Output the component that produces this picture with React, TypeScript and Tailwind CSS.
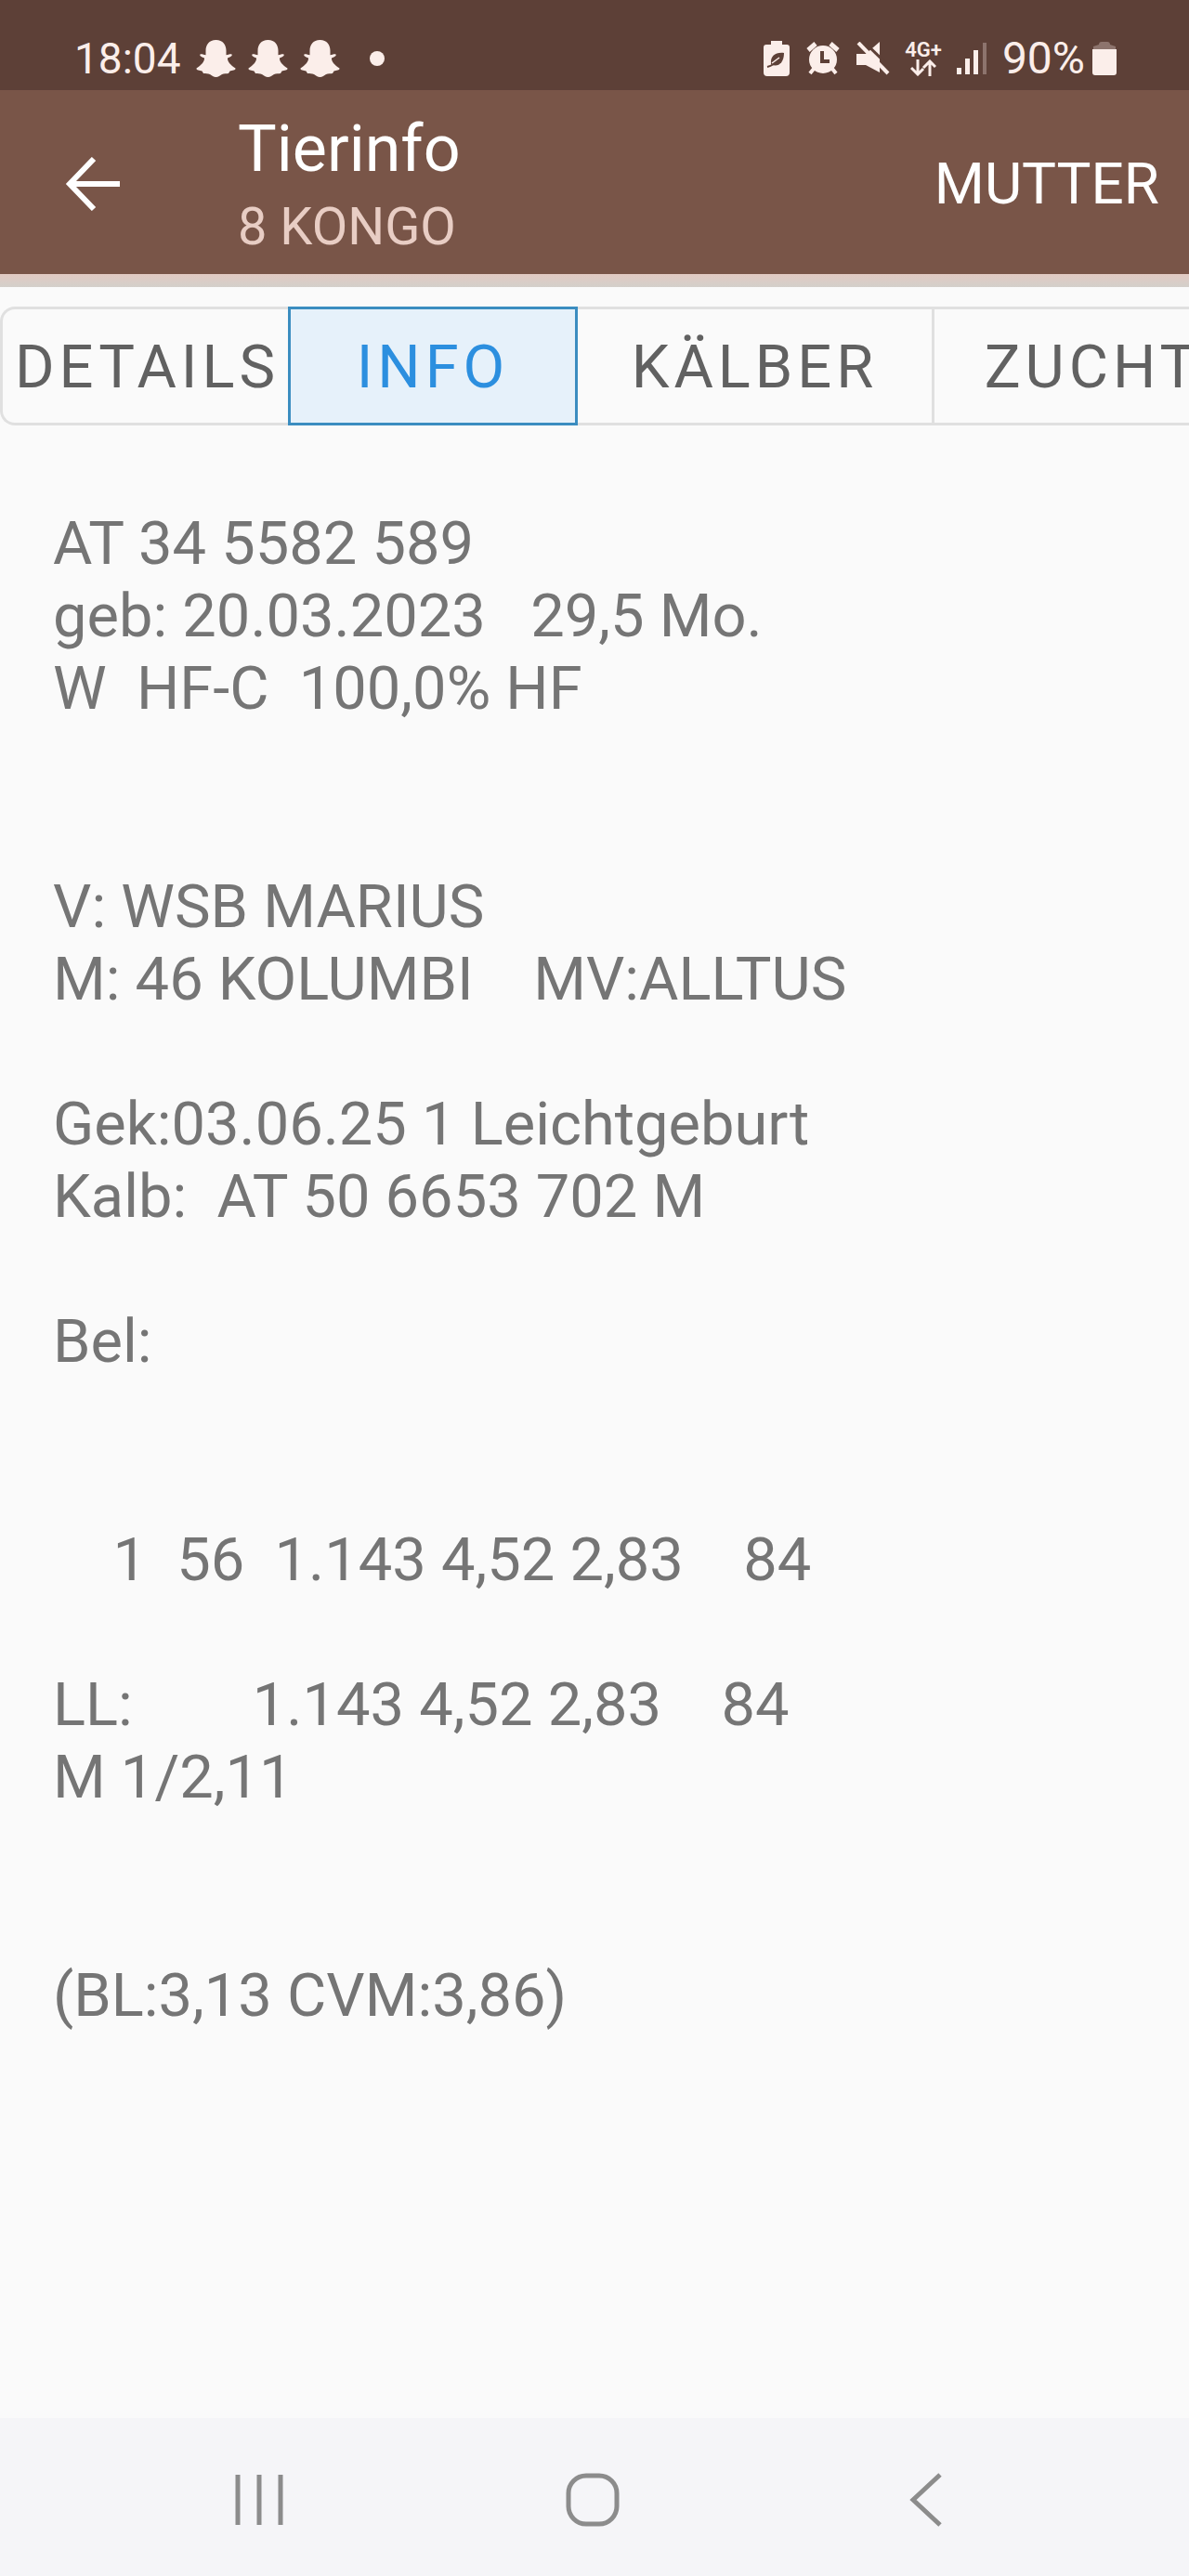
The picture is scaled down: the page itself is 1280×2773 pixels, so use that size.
import type { ReactNode } from "react";

interface TabItem {
	label: string;
	active?: boolean;
	className: string;
}

interface InfoBlock {
	lines: string[];
	className: string;
}

const tabs: TabItem[] = [
	{ label: "DETAILS", className: "w-[310px] rounded-l-2xl border-l-3 pl-1" },
	{ label: "INFO", active: true, className: "w-[312px] border-x-3" },
	{ label: "KÄLBER", className: "w-[384px] border-r-3" },
	{ label: "ZUCHT", className: "w-[340px]" },
];

const blocks: InfoBlock[] = [
	{
		lines: ["AT 34 5582 589", "geb: 20.03.2023   29,5 Mo.", "W  HF-C  100,0% HF"],
		className: "",
	},
	{
		lines: ["V: WSB MARIUS", "M: 46 KOLUMBI    MV:ALLTUS"],
		className: "mt-[157px]",
	},
	{
		lines: ["Gek:03.06.25 1 Leichtgeburt", "Kalb:  AT 50 6653 702 M"],
		className: "mt-[78px]",
	},
	{ lines: ["Bel:"], className: "mt-[78px]" },
	{
		lines: ["    1  56  1.143 4,52 2,83    84"],
		className: "mt-[157px]",
	},
	{
		lines: ["LL:        1.143 4,52 2,83    84", "M 1/2,11"],
		className: "mt-[78px]",
	},
	{ lines: ["(BL:3,13 CVM:3,86)"], className: "mt-[157px]" },
];

const GhostIcon = () => (
	<svg viewBox="0 0 43 42" className="h-[42px] w-[43px] fill-current">
		<path d="M21.500 1C14 1 10.500 6.500 10.500 12.500V17.200C8.500 17 6 15.800 4.500 16.500C3.500 17.500 5.500 19.500 9 20.500C9.500 24 5.500 28.500 0.500 31.500C0 33.500 4 34 6.500 34.500L8 37C10 37.500 13 36.800 15 38C17 39.500 19 41 21.500 41C24 41 26 39.500 28 38C30 36.800 33 37.500 35 37L36.500 34.500C39 34 43 33.500 42.500 31.500C37.500 28.500 33.500 24 34 20.500C37.500 19.500 39.500 17.500 38.500 16.500C37 15.800 34.500 17 32.500 17.200V12.500C32.500 6.500 29 1 21.500 1Z" />
	</svg>
);

const PowerSaveIcon = () => (
	<svg viewBox="0 0 28 38" className="h-[38px] w-7">
		<path d="M8 4V0H20V4H25Q28 4 28 7V34Q28 38 24 38H4Q0 38 0 34V7Q0 4 3 4Z" fill="currentColor" />
		<path d="M22 13C13 12 7 16 8 25C14 29 22 25 22 13Z" fill="#5d4037" />
		<path d="M4 28C9 27 13 24 17 19" stroke="#5d4037" strokeWidth="2" fill="none" />
		<path d="M9 24L17 18" stroke="currentColor" strokeWidth="1.500" />
	</svg>
);

const AlarmIcon = () => (
	<svg viewBox="0 0 36 36" className="size-9">
		<circle cx="18" cy="19" r="15" fill="currentColor" />
		<path d="M2 9L10 2M34 9L26 2" stroke="currentColor" strokeWidth="5" />
		<path d="M8 29L4 34M28 29L32 34" stroke="currentColor" strokeWidth="4" />
		<path d="M17 10V21H25" stroke="#5d4037" strokeWidth="4" fill="none" />
	</svg>
);

const MuteIcon = () => (
	<svg viewBox="0 0 36 36" className="size-9">
		<path d="M0 13H10L25 0V33L10 25H0Z" fill="currentColor" />
		<path d="M6 -2L38 29" stroke="#5d4037" strokeWidth="3" />
		<path d="M2 1L34 34" stroke="currentColor" strokeWidth="4" />
	</svg>
);

const DataArrowsIcon = () => (
	<svg viewBox="0 0 28 18" className="h-[18px] w-7" fill="none" stroke="currentColor" strokeWidth="3">
		<path d="M8 0V15M1 9L8 16L14 10M21 18V3M14 9L21 2L27 8" />
	</svg>
);

const SignalIcon = () => (
	<svg viewBox="0 0 33 36" className="h-9 w-[33px] fill-current">
		<path d="M0 28H5V35H0ZM9 18H14V35H9ZM18 9H23V35H18Z" />
		<path d="M28 1H32V35H28Z" opacity="0.3" />
	</svg>
);

const BatteryIcon = () => (
	<svg viewBox="0 0 26 38" className="h-[38px] w-[26px] fill-current">
		<path d="M7 4Q7 1 10 1H16Q19 1 19 4L25 6V9H1V6Z" opacity="0.3" />
		<path d="M0 9H26V34Q26 37 23 37H3Q0 37 0 34Z" />
	</svg>
);

const StatusBar = () => (
	<div className="flex h-[97px] items-center justify-between bg-[#5d4037] pt-7 pr-[78px] pl-20 text-[#fbeeea]">
		<div className="flex items-center">
			<span className="mr-4 text-[46px] leading-none">18:04</span>
			<div className="flex gap-[13px]">
				<GhostIcon />
				<GhostIcon />
				<GhostIcon />
			</div>
			<span className="ml-8 size-4 rounded-full bg-current" />
		</div>
		<div className="flex items-center">
			<PowerSaveIcon />
			<span className="ml-[18px] flex">
				<AlarmIcon />
			</span>
			<span className="ml-[18px] flex">
				<MuteIcon />
			</span>
			<span className="ml-4 flex flex-col items-center">
				<span className="text-[22px] leading-5 font-semibold">4G+</span>
				<DataArrowsIcon />
			</span>
			<span className="ml-4 flex">
				<SignalIcon />
			</span>
			<span className="mr-2 ml-4 text-[48px] leading-none">90%</span>
			<BatteryIcon />
		</div>
	</div>
);

const AppBar = () => (
	<header className="flex h-[198px] items-center bg-[#795548] pt-1 pr-8 pl-[70px] text-white">
		<button type="button" aria-label="Zurück" className="mr-[126px]">
			<svg viewBox="0 0 60 58" className="h-[58px] w-[60px]" fill="none" stroke="currentColor" strokeWidth="6">
				<path d="M31 2L5 29L31 56M5 29H59" />
			</svg>
		</button>
		<div className="flex-1 pt-2">
			<h1 className="text-[70px] leading-[84px]">Tierinfo</h1>
			<p className="text-[56px] leading-[84px] text-[#e8cdc4]">8 KONGO</p>
		</div>
		<button type="button" className="text-[62px] leading-none">
			MUTTER
		</button>
	</header>
);

const Tab = ({ label, active, className }: TabItem) => (
	<button
		type="button"
		aria-pressed={active ?? false}
		className={`shrink-0 border-y-3 pt-1 text-[65px] tracking-[5px] ${className} ${
			active ? "border-[#3b8dc0] bg-[#e6f1fa] text-[#2c8fdf]" : "border-[#e0e0e0] text-[#616161]"
		}`}
	>
		{label}
	</button>
);

const TabBar = () => (
	<nav className="flex h-32 overflow-hidden">
		{tabs.map((tab) => (
			<Tab key={tab.label} {...tab} />
		))}
	</nav>
);

const NavButton = ({ label, children }: { label: string; children: ReactNode }) => (
	<button type="button" aria-label={label} className="flex justify-center">
		<svg viewBox="0 0 58 58" className="size-[58px]" fill="none" stroke="#8c8c8c" strokeWidth="5">
			{children}
		</svg>
	</button>
);

const NavigationBar = () => (
	<footer className="grid h-[170px] grid-cols-3 items-center bg-[#f5f5f8] pt-1.5 pr-26 pl-25">
		<NavButton label="Letzte Apps">
			<path d="M6 2V56M29 2V56M52 2V56" />
		</NavButton>
		<NavButton label="Startseite">
			<rect x="3" y="3" width="52" height="52" rx="19" />
		</NavButton>
		<NavButton label="Zurück">
			<path d="M44 2L15 29L44 56" />
		</NavButton>
	</footer>
);

export default function App() {
	return (
		<div className="flex min-h-screen flex-col overflow-hidden bg-[#fafafa] font-[Roboto,sans-serif]">
			<StatusBar />
			<AppBar />
			<div className="h-3.5 bg-linear-to-b from-[#e2cac3] to-[#d3cfca]" />
			<div className="mt-[21px]">
				<TabBar />
			</div>
			<main className="mt-[88px] flex-1 pl-[57px] text-[65px] leading-[78px] text-[#757575]">
				{blocks.map((block) => (
					<div key={block.lines[0]} className={block.className}>
						{block.lines.map((line) => (
							<p key={line} className="whitespace-pre">
								{line}
							</p>
						))}
					</div>
				))}
			</main>
			<NavigationBar />
		</div>
	);
}
